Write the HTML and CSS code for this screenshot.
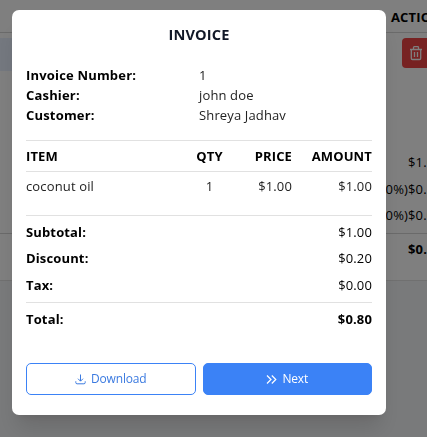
FILE: index.html
```html
<!DOCTYPE html>
<html lang="en">
<head>
<meta charset="utf-8">
<title>Invoice</title>
<link rel="stylesheet" href="styles.css">
</head>
<body>
<main class="page">
  <section class="cart">
    <header class="cart-head">ACTION</header>
    <div class="cart-item">
      <div class="field"></div>
      <button class="delete" aria-label="Delete">
        <svg width="16" height="16" viewBox="0 0 16 16" fill="none" stroke="currentColor" stroke-width="1.3"><path d="M2 4.500h12M3.300 4.500v8.800a1.200 1.200 0 0 0 1.200 1.200h7a1.200 1.200 0 0 0 1.200-1.200V4.500M5.500 4.300V2.500a.8.8 0 0 1 .8-.8h3.400a.8.8 0 0 1 .8.8v1.800M6.500 7v5M9.500 7v5"/></svg>
      </button>
    </div>
    <div class="sums">
      <p><span></span><span>$1.00</span></p>
      <p><span>(20%)</span><span>$0.20</span></p>
      <p><span>(0%)</span><span>$0.00</span></p>
      <p class="sum-total"><span></span><span>$0.80</span></p>
    </div>
  </section>
</main>
<div class="overlay">
  <div class="modal" role="dialog">
    <h1>INVOICE</h1>
    <dl class="info">
      <dt>Invoice Number:</dt><dd>1</dd>
      <dt>Cashier:</dt><dd>john doe</dd>
      <dt>Customer:</dt><dd>Shreya Jadhav</dd>
    </dl>
    <table class="items">
      <thead><tr><th class="item">ITEM</th><th class="qty">QTY</th><th class="price">PRICE</th><th class="amount">AMOUNT</th></tr></thead>
      <tbody><tr><td class="item">coconut oil</td><td class="qty">1</td><td class="price">$1.00</td><td class="amount">$1.00</td></tr></tbody>
    </table>
    <div class="summary">
      <p><b>Subtotal:</b><span>$1.00</span></p>
      <p><b>Discount:</b><span>$0.20</span></p>
      <p><b>Tax:</b><span>$0.00</span></p>
      <p class="total"><b>Total:</b><b>$0.80</b></p>
    </div>
    <div class="actions">
      <button class="btn outline"><svg width="11" height="12" viewBox="0 0 11 12" fill="none" stroke="currentColor"><path d="M5.500 1.500v6.500M3 5.700l2.500 2.500L8 5.700M.8 8.300v1.200a1.300 1.300 0 0 0 1.300 1.300h6.800a1.300 1.300 0 0 0 1.300-1.300V8.300"/></svg><span>Download</span></button>
      <button class="btn solid"><svg width="11" height="12" viewBox="0 0 11 12" fill="none" stroke="currentColor" stroke-width="1.2"><path d="m1 2.500 4 4-4 4M5.800 2.500l4 4-4 4"/></svg><span>Next</span></button>
    </div>
  </div>
</div>
</body>
</html>
```
FILE: styles.css
```css
* { box-sizing: border-box; margin: 0; padding: 0; }
body {
  width: 427px;
  height: 437px;
  overflow: hidden;
  background: #f3f4f6;
  color: #000;
  font: 13px/20px "Open Sans", sans-serif;
  letter-spacing: .14px;
}
button { font: inherit; }
.cart {
  height: 281px;
  background: #fff;
  border-bottom: 1px solid #e1e1e1;
}
.cart-head {
  height: 33px;
  padding: 7px 0 0 391px;
  border-bottom: 1px solid #d4d4d4;
  font-weight: 700;
  white-space: nowrap;
}
.cart-item {
  display: flex;
  height: 110px;
  padding-top: 5px;
}
.field { flex: 0 0 402px; height: 33px; background: linear-gradient(90deg, #e8f0fe 200px, #fff 200px); }
.delete {
  flex: 0 0 40px;
  height: 30px;
  padding-left: 6px;
  border: 0;
  border-radius: 4px;
  background: #ef4444;
  color: #fff;
}
.delete svg { display: block; }
.sums { padding-top: 6px; }
.sums p { display: grid; grid-template-columns: 408px 40px; height: 26.6px; line-height: 26.6px; }
.sums span:first-child { text-align: right; }
.sums .sum-total { height: 33px; margin-top: 4.2px; border-top: 1px solid #d4d4d4; font-weight: 700; line-height: 31px; }
.overlay {
  position: fixed;
  inset: 0;
  padding: 10px 0 0 12px;
  background: rgba(0, 0, 0, .5);
}
.modal {
  width: 374px;
  height: 405px;
  padding: 14px;
  border-radius: 7px;
  background: #fff;
  box-shadow: 0 18px 22px -5px rgba(0, 0, 0, .12), 0 7px 9px -5px rgba(0, 0, 0, .08);
}
h1 { height: 41px; color: #111827; font-size: 14.6px; line-height: 20px; letter-spacing: .15px; text-align: center; }
.info { display: grid; grid-template-columns: 173px 1fr; align-content: start; height: 75px; }
dt { font-weight: 700; letter-spacing: .18px; }
dd { color: #222; }
.items { width: 100%; height: 74px; border-collapse: collapse; table-layout: fixed; border-top: 1px solid #e1e1e1; }
.items tr { height: 31px; }
.items tbody tr { height: 43px; border-top: 1px solid #e1e1e1; }
.items td { padding-top: 4px; vertical-align: top; color: #222; }
.item { width: 160px; text-align: left; }
.qty { width: 47px; text-align: center; }
.price { width: 59px; text-align: right; }
.amount { text-align: right; }
.summary { height: 148px; padding-top: 3px; border-top: 1px solid #e1e1e1; }
.summary p { display: flex; justify-content: space-between; height: 26.6px; line-height: 26.6px; }
.summary .total { height: 34px; margin-top: 4.2px; border-top: 1px solid #e1e1e1; line-height: 32px; }
.actions { display: flex; gap: 7px; }
.btn {
  display: flex;
  flex: 1;
  align-items: center;
  justify-content: center;
  gap: 5px;
  height: 32px;
  border: 1px solid #3b82f6;
  border-radius: 5px;
  font-size: 12px;
  letter-spacing: -.15px;
}
.outline { background: #fff; color: #3b7ae0; }
.solid { background: #3b82f6; color: #fff; }
```
